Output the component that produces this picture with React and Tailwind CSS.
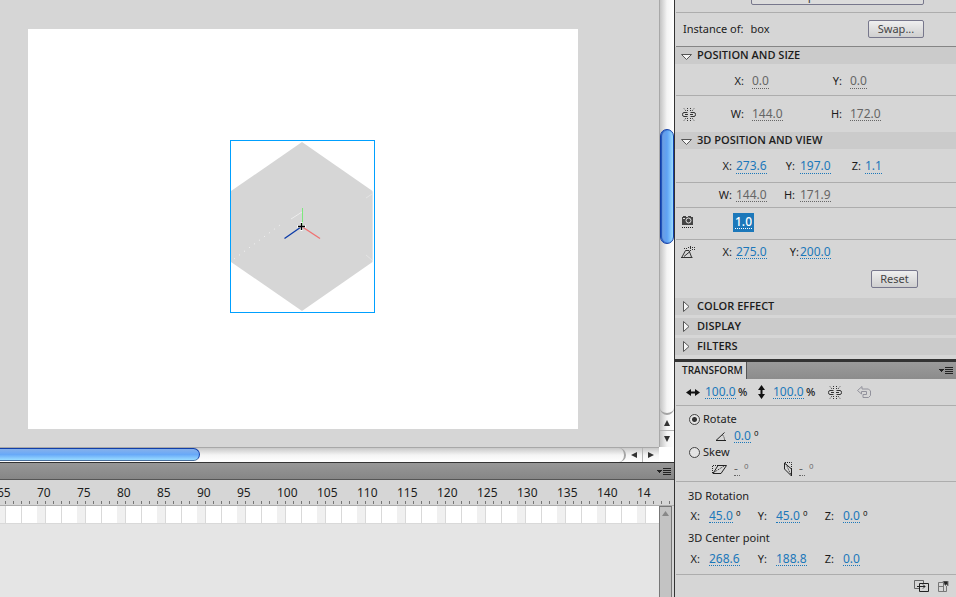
import { useState } from "react";

const PANEL_FONT = "font-['Noto_Sans','Open_Sans',sans-serif]";

const FRAME_LABELS = ["65", "70", "75", "80", "85", "90", "95", "100", "105", "110", "115", "120", "125", "130", "135", "140", "14"];

const VALUE_TONES = {
  blue: "border-[#1c78ba] text-[#1c78ba]",
  gray: "border-[#666666] text-[#666666]",
  selected: "border-white bg-[#1c78ba] font-medium text-white",
};

function HotValue({ id, label, value, tone = "blue", labelClass = "", className = "w-[31px]" }) {
  const [text, setText] = useState(value);
  return (
    <>
      <label htmlFor={id} className={`shrink-0 text-right text-[11px] ${labelClass}`}>
        {label}
      </label>
      <input
        id={id}
        type="text"
        value={text}
        onChange={(e) => setText(e.target.value)}
        className={`h-[14px] shrink-0 border-b border-dotted text-[12px] leading-[14px] outline-none ${VALUE_TONES[tone]} ${className}`}
      />
    </>
  );
}

function IconValue({ label, value, tone = "blue", className }) {
  const [text, setText] = useState(value);
  return (
    <input
      type="text"
      aria-label={label}
      value={text}
      onChange={(e) => setText(e.target.value)}
      className={`h-[14px] shrink-0 border-b border-dotted text-[12px] leading-[14px] outline-none ${VALUE_TONES[tone]} ${className}`}
    />
  );
}

function Degree() {
  return <span className="w-[6px] shrink-0 text-[12px] leading-[14px]">º</span>;
}

function Rule() {
  return <div className="ml-px h-px shrink-0 bg-[#adadad]" />;
}

function SectionHeader({ title, open = false }) {
  return (
    <button
      type="button"
      aria-expanded={open}
      className="flex h-[17px] w-full items-center bg-[#cbcbcb] pl-[6px] text-left font-['Open_Sans','Noto_Sans',sans-serif] text-[11px] font-semibold"
    >
      <svg width="12" height="13" viewBox="0 0 12 13" className="mr-1 shrink-0">
        {open ? (
          <path d="M.5 5.5h10L5.500 10.500z" fill="#f4f4f4" stroke="#555" />
        ) : (
          <path d="M2.500 1.500v10l5.500-5z" fill="#f4f4f4" stroke="#555" />
        )}
      </svg>
      <span className="h-[17px] leading-4">{title}</span>
    </button>
  );
}

function BrokenLinkIcon() {
  return (
    <svg width="14" height="13" viewBox="0 0 14 13" fill="none" stroke="#333">
      <path d="M5.500 4.500H2Q.5 4.500 .5 6.500T2 8.500H5.500M3 6.500H6M8.500 4.500H12Q13.500 4.500 13.500 6.500T12 8.500H8.500M8 6.500H11" />
      <path d="M2 .500L4 3M5.500 0V3M8.500 0V3M12 .500L10 3M2 12.500L4 10M5.500 13V10M8.500 13V10M12 12.500L10 10" strokeDasharray="1 1" />
    </svg>
  );
}

function MenuIcon() {
  return (
    <svg width="14" height="9" viewBox="0 0 14 9" shapeRendering="crispEdges">
      <path d="M0 3h5L2.500 6z" fill="#222" />
      <path d="M6 1.500h8M6 3.500h8M6 5.500h8M6 7.500h8" stroke="#222" />
    </svg>
  );
}

function StepButton({ label, points, className }) {
  return (
    <button type="button" aria-label={label} className={`flex items-center justify-center ${className}`}>
      <svg width="8" height="8" viewBox="0 0 8 8">
        <polygon points={points} fill="#333" />
      </svg>
    </button>
  );
}

function Stage() {
  return (
    <div className="min-w-0 flex-1 overflow-hidden bg-[#d6d6d6] pt-[29px] pl-7">
      <div className="flex h-[400px] w-[550px] bg-white pt-[111px] pl-[202px]">
        <svg width="145" height="173" viewBox="0 0 145 173" className="shrink-0">
          <path d="M72 2L142.500 51V122L72 171L1 122V51z" fill="#d6d6d6" />
          <path d="M61 79L72 72" stroke="#ececec" />
          <path d="M4 119L50 85" stroke="#f2f2f2" strokeDasharray="1.200 5" />
          <path d="M136 58L142 54M136 115L142 120M142.500 52V120" stroke="#e4e4e4" />
          <rect x=".5" y=".5" width="144" height="172" fill="none" stroke="#00a0ff" />
          <path d="M72.500 86V68" stroke="#7de87d" />
          <path d="M72.500 87L90 98.500" stroke="#f07070" strokeWidth="1.300" />
          <path d="M71 87L54.500 98.500" stroke="#0a3aa8" strokeWidth="1.300" />
          <path d="M67 86.500h9M71.500 82v9" stroke="#fff" strokeWidth="2" />
          <path d="M68 86.500h7M71.500 83v7" stroke="#000" strokeWidth="1.300" />
        </svg>
      </div>
    </div>
  );
}

function VerticalScrollbar() {
  return (
    <div className="flex w-[15px] shrink-0 flex-col border-l border-[#a8a8a8] bg-linear-to-r from-[#c4c4c4] via-[#f4f4f4] to-white">
      <div className="h-[129px] shrink-0" />
      <div className="h-[115px] shrink-0 rounded-full border border-[#123fa8] bg-linear-to-r from-[#6f9cdc] via-[#5fa2f4] to-[#9adcff] shadow-[inset_1px_0_1px_#1c4fb8]" />
      <div className="min-h-0 flex-1 rounded-b-full border-b-2 border-[#a4a4a4]" />
      <StepButton label="Scroll up" points="4,1 7,7 1,7" className="h-[15px] shrink-0" />
      <StepButton label="Scroll down" points="4,7 7,1 1,1" className="h-[17px] shrink-0 border-t border-[#b5b5b5]" />
    </div>
  );
}

function HorizontalScrollbar() {
  return (
    <div className="flex h-[15px] shrink-0 bg-white">
      <div className="flex min-w-0 flex-1 border-t border-[#a8a8a8] bg-linear-to-b from-[#c9c9c9] via-[#f4f4f4] to-white">
        <div className="h-[13px] w-[200px] shrink-0 rounded-r-full border border-l-0 border-t-[#123fa8] border-r-[#123fa8] border-b-[#4a6f9c] bg-linear-to-b from-[#86b0ea] via-[#68a9f8] to-[#9adcff]" />
        <div className="min-w-0 flex-1 rounded-r-full border-r-2 border-[#a4a4a4]" />
        <StepButton label="Scroll left" points="1,4 7,1 7,7" className="w-4 shrink-0" />
        <StepButton label="Scroll right" points="7,4 1,1 1,7" className="w-[17px] shrink-0 border-l border-[#b5b5b5]" />
      </div>
      <div className="w-[15px] shrink-0 bg-white" />
    </div>
  );
}

function Ruler() {
  return (
    <div className="h-[26px] shrink-0 overflow-hidden border-b border-[#adadad] bg-[#d6d6d6]">
      <div className="-ml-1 flex h-[21px] pt-[5px]">
        {FRAME_LABELS.map((n) => (
          <span key={n} className="w-10 shrink-0 pl-px text-[12px] leading-4">
            {n}
          </span>
        ))}
      </div>
      <svg width="100%" height="3" className="block">
        <defs>
          <pattern id="ticks" width="8" height="3" patternUnits="userSpaceOnUse">
            <rect x="5" width="1" height="3" fill="#777" />
          </pattern>
        </defs>
        <rect width="100%" height="3" fill="url(#ticks)" />
      </svg>
    </div>
  );
}

function Timeline() {
  return (
    <div className="flex h-[135px] shrink-0 flex-col">
      <div className="flex h-[18px] shrink-0 items-center justify-end border-t border-b border-t-[#333333] border-b-[#555555] bg-linear-to-b from-[#979797] to-[#868686] pr-[3px]">
        <button type="button" aria-label="Timeline menu">
          <MenuIcon />
        </button>
      </div>
      <Ruler />
      <div className="flex min-h-0 flex-1">
        <div className="min-w-0 flex-1 bg-[#e5e5e5]">
          <svg width="100%" height="18" className="block">
            <defs>
              <pattern id="frames" width="40" height="18" patternUnits="userSpaceOnUse">
                <rect width="40" height="17" fill="#fff" />
                <rect x="37" width="3" height="17" fill="#f0f0f0" />
                <rect width="5" height="17" fill="#f0f0f0" />
                <rect x="5" width="1" height="17" fill="#d9d9d9" />
                <rect x="21" width="1" height="17" fill="#d9d9d9" />
                <rect y="17" width="40" height="1" fill="#d9d9d9" />
              </pattern>
            </defs>
            <rect width="100%" height="18" fill="url(#frames)" />
          </svg>
        </div>
        <div className="flex w-[13px] shrink-0 justify-center border border-b-0 border-[#777777] bg-[#c3c3c3] pt-1">
          <svg width="7" height="5" viewBox="0 0 7 5">
            <path d="M3.500 0L7 5H0z" fill="#888" />
          </svg>
        </div>
        <div className="w-[2px] shrink-0 bg-[#d6d6d6]" />
      </div>
    </div>
  );
}

function PropertiesPanel() {
  const buttonClass =
    "h-[18px] rounded-[2px] border border-[#77778c] bg-linear-to-b from-[#efefef] to-[#cfcfcf] text-[11px] leading-4 text-[#444444]";

  return (
    <section aria-label="Properties" className="shrink-0">
      <div className="flex h-3 items-end justify-end overflow-hidden pr-8 pb-[7px]">
        <select
          aria-label="Instance behavior"
          className="h-[18px] w-[173px] shrink-0 appearance-none rounded-[2px] border border-[#77778c] bg-[#dcdcdc] pl-[5px] text-[12px] leading-4 text-[#444444]"
        >
          <option>Movie Clip</option>
        </select>
      </div>
      <Rule />
      <div className="flex h-[33px] items-center pr-8 pb-px pl-2 text-[11px]">
        <span>Instance of:</span>
        <span className="ml-[7px]">box</span>
        <button type="button" className={`ml-auto w-14 ${buttonClass}`}>
          Swap...
        </button>
      </div>
      <div className="ml-px h-px bg-[#858585]" />
      <SectionHeader title="POSITION AND SIZE" open />
      <div className="flex h-[31px] items-center pt-1">
        <HotValue id="pos-x" label="X:" value="0.0" tone="gray" labelClass="w-[69px] mr-2" className="w-[17px]" />
        <HotValue id="pos-y" label="Y:" value="0.0" tone="gray" labelClass="w-[73px] mr-2" className="w-[17px]" />
      </div>
      <Rule />
      <div className="flex h-9 items-center pl-[7px]">
        <BrokenLinkIcon />
        <HotValue id="size-w" label="W:" value="144.0" tone="gray" labelClass="w-12 mr-2" />
        <HotValue id="size-h" label="H:" value="172.0" tone="gray" labelClass="w-[59px] mr-2" />
      </div>
      <SectionHeader title="3D POSITION AND VIEW" open />
      <div className="flex h-[33px] items-center pt-[2px]">
        <HotValue id="view-x" label="X:" value="273.6" labelClass="w-[57px] mr-1" />
        <HotValue id="view-y" label="Y:" value="197.0" labelClass="w-7 mr-[5px]" />
        <HotValue id="view-z" label="Z:" value="1.1" labelClass="w-[30px] mr-1" className="w-[17px]" />
      </div>
      <Rule />
      <div className="flex h-6 items-center">
        <HotValue id="view-w" label="W:" value="144.0" tone="gray" labelClass="w-[57px] mr-1" />
        <HotValue id="view-h" label="H:" value="171.9" tone="gray" labelClass="w-7 mr-[5px]" />
      </div>
      <Rule />
      <div className="flex h-[31px] items-center pb-[3px] pl-[7px]">
        <svg width="13" height="14" viewBox="0 0 13 14">
          <path d="M0 3V2H1V1H4V2H6V1H9V2H11V10H0z" fill="#444" />
          <circle cx="6.500" cy="5.500" r="2.500" fill="#444" stroke="#e4e4e4" />
          <path d="M1 3.500h2" stroke="#e4e4e4" />
          <path d="M0 12.500h11" stroke="#222" strokeDasharray="1 1" />
        </svg>
        <div className="ml-[38px] flex h-[19px] w-[21px] items-center justify-center bg-[#1c78ba]">
          <IconValue label="Perspective angle" value="1.0" tone="selected" className="w-[17px]" />
        </div>
      </div>
      <Rule />
      <div className="flex h-[26px] items-center pb-[2px] pl-[6px]">
        <svg width="14" height="13" viewBox="0 0 14 13" fill="none" stroke="#333">
          <path d="M0 11.500H11.500M1 11L4.500 4.500H8L10.500 11M3 10.500L9 5.500" />
          <path d="M3 2.500h4M7 1.500h7M9.500 0v5M11 3.500h3" strokeDasharray="1 1" />
        </svg>
        <HotValue id="vanish-x" label="X:" value="275.0" labelClass="w-[37px] mr-1" />
        <HotValue id="vanish-y" label="Y:" value="200.0" labelClass="w-8 mr-px" />
      </div>
      <div className="flex justify-end pt-1 pr-[38px] pb-[10px]">
        <button type="button" className={`w-[47px] ${buttonClass}`}>
          Reset
        </button>
      </div>
      <div className="flex flex-col gap-[3px] pb-1">
        <SectionHeader title="COLOR EFFECT" />
        <SectionHeader title="DISPLAY" />
        <SectionHeader title="FILTERS" />
      </div>
    </section>
  );
}

function TransformPanel() {
  const [mode, setMode] = useState("rotate");
  const radioClass =
    "size-[11px] appearance-none rounded-full border border-[#444444] bg-[#e4e4e4] checked:bg-[radial-gradient(circle,#333_2px,#e4e4e4_3px)]";

  return (
    <section aria-label="Transform" className="flex min-h-0 flex-1 flex-col border-t-3 border-[#333333]">
      <div className="flex h-[17px] shrink-0 bg-linear-to-b from-[#9b9b9b] to-[#8c8c8c]">
        <h2 className="flex w-[72px] items-center border-r border-[#555555] bg-[#d6d6d6] pl-[7px] font-['Open_Sans','Noto_Sans',sans-serif] text-[10px] font-semibold">
          TRANSFORM
        </h2>
        <button type="button" aria-label="Transform menu" className="mr-[3px] ml-auto">
          <MenuIcon />
        </button>
      </div>
      <div className="flex h-[26px] shrink-0 items-center pl-[11px]">
        <svg width="14" height="7" viewBox="0 0 14 7" className="mr-[5px]">
          <path d="M0 3.500L5 0V2.500H9V0L14 3.500L9 7V4.500H5V7z" fill="#111" />
        </svg>
        <IconValue label="Scale width" value="100.0" className="mr-[2px] w-[31px]" />
        <span className="w-[10px] text-[11px] font-medium">%</span>
        <svg width="7" height="14" viewBox="0 0 7 14" className="mr-2 ml-[10px]">
          <path d="M3.500 0L7 5H4.500V9H7L3.500 14L0 9H2.500V5H0z" fill="#111" />
        </svg>
        <IconValue label="Scale height" value="100.0" className="mr-[2px] w-[31px]" />
        <span className="w-[10px] text-[11px] font-medium">%</span>
        <button type="button" aria-label="Constrain" className="ml-3">
          <BrokenLinkIcon />
        </button>
        <button type="button" aria-label="Reset transform" className="ml-[15px]">
          <svg width="14" height="12" viewBox="0 0 14 12" fill="none" stroke="#92929c">
            <path d="M5 .5L.5 4.500L4.500 8V5.500H9.500V8.500H6V11.500H11.500L13.500 9.500V5L11.500 3H5z" />
          </svg>
        </button>
      </div>
      <Rule />
      <div className="flex h-[75px] shrink-0 flex-col pt-[6px] pl-[14px] text-[11px]">
        <label className="flex h-[15px] items-center gap-[3px]">
          <input type="radio" name="mode" checked={mode === "rotate"} onChange={() => setMode("rotate")} className={radioClass} />
          Rotate
        </label>
        <div className="flex h-[18px] items-center pl-[26px]">
          <svg width="12" height="9" viewBox="0 0 12 9" fill="none" stroke="#222">
            <path d="M9.500 .5L1 8.500H11" />
            <path d="M7.500 3Q9.500 5 9.500 8" strokeDasharray="1 1" />
          </svg>
          <IconValue label="Rotate angle" value="0.0" className="mr-[3px] ml-[7px] w-[17px]" />
          <Degree />
        </div>
        <label className="flex h-[15px] items-center gap-[3px]">
          <input type="radio" name="mode" checked={mode === "skew"} onChange={() => setMode("skew")} className={radioClass} />
          Skew
        </label>
        <div className="flex h-[18px] items-center pl-[23px] text-[#777777]">
          <svg width="16" height="9" viewBox="0 0 16 9" fill="none" stroke="#222">
            <path d="M6 .5H14.500L9 8.500H1z" />
            <path d="M.5 8V.5H6M1 8L12 1" strokeDasharray="1 1" />
          </svg>
          <IconValue label="Skew horizontal" value="-" tone="gray" className="mr-1 ml-[6px] w-[6px]" />
          <Degree />
          <svg width="9" height="15" viewBox="0 0 9 15" fill="none" stroke="#222" className="ml-[34px]">
            <path d="M.5 1L7.500 7V14L.5 7z" />
            <path d="M1 .5H7.500V7M2 2L7 13" strokeDasharray="1 1" />
          </svg>
          <IconValue label="Skew vertical" value="-" tone="gray" className="mr-1 ml-[6px] w-[6px]" />
          <Degree />
        </div>
      </div>
      <Rule />
      <div className="h-[92px] shrink-0 pt-[5px] pl-[13px] text-[11px]">
        <h3 className="h-[17px] leading-[17px]">3D Rotation</h3>
        <div className="flex h-6 items-center">
          <HotValue id="rot-x" label="X:" value="45.0" labelClass="w-3 mr-[9px]" className="mr-[3px] w-6" />
          <Degree />
          <HotValue id="rot-y" label="Y:" value="45.0" labelClass="w-[25px] mr-[9px]" className="mr-[3px] w-6" />
          <Degree />
          <HotValue id="rot-z" label="Z:" value="0.0" labelClass="w-[25px] mr-[9px]" className="mr-[3px] w-[17px]" />
          <Degree />
        </div>
        <h3 className="h-5 leading-5">3D Center point</h3>
        <div className="flex h-[22px] items-center">
          <HotValue id="center-x" label="X:" value="268.6" labelClass="w-3 mr-[9px]" />
          <HotValue id="center-y" label="Y:" value="188.8" labelClass="w-[27px] mr-[9px]" />
          <HotValue id="center-z" label="Z:" value="0.0" labelClass="w-[27px] mr-[9px]" className="w-[17px]" />
        </div>
      </div>
      <Rule />
      <div className="flex h-[22px] shrink-0 items-center justify-end gap-[9px] pr-[7px]">
        <button type="button" aria-label="Duplicate selection and transform">
          <svg width="15" height="12" viewBox="0 0 15 12" fill="none" stroke="#222">
            <path d="M5 8.500H.5V.5H9.500V3" stroke="#666" />
            <path d="M5.500 3.500H14.500V11.500H5.500zM3 6.500H11M9 4.500L11 6.500L9 8.500" />
          </svg>
        </button>
        <button type="button" aria-label="Remove transform">
          <svg width="11" height="11" viewBox="0 0 11 11" fill="none" stroke="#777">
            <path d="M5 1.500H.5V10.500H8.500V5M.5 5.500H6M5.500 2V10" />
            <path d="M5 0H10V5L8.500 3.500L7.500 4.500L6 2.500z" fill="#222" />
          </svg>
        </button>
      </div>
    </section>
  );
}

export default function App() {
  return (
    <div className={`flex h-screen w-full overflow-hidden bg-[#d6d6d6] text-[#1c1c1c] ${PANEL_FONT}`}>
      <main className="flex min-w-0 flex-1 flex-col">
        <div className="flex min-h-0 flex-1">
          <Stage />
          <VerticalScrollbar />
        </div>
        <HorizontalScrollbar />
        <Timeline />
      </main>
      <aside className="flex w-[282px] shrink-0 flex-col overflow-hidden border-l border-[#333333]">
        <PropertiesPanel />
        <TransformPanel />
      </aside>
    </div>
  );
}
